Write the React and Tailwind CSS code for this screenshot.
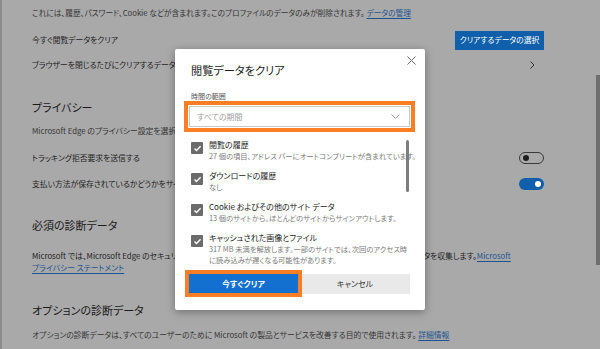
import React from 'react';

const Toggle = ({ on }) => (
  on ? (
    <div className="w-[25px] h-[12px] rounded-full bg-[#0f5fab] flex items-center justify-end pr-[3px]">
      <div className="w-[6px] h-[6px] rounded-full bg-white" />
    </div>
  ) : (
    <div className="w-[25px] h-[12px] rounded-full border border-[#3a3a3a] flex items-center pl-[3px]">
      <div className="w-[6px] h-[6px] rounded-full bg-[#1e1e1e]" />
    </div>
  )
);

const Check = () => (
  <div className="w-[12px] h-[12px] rounded-[1px] bg-[#6b6b6b] flex items-center justify-center shrink-0 mt-[3px]">
    <svg width="9" height="9" viewBox="0 0 9 9"><path d="M1.5 4.6 L3.5 6.6 L7.6 2.2" fill="none" stroke="#fff" strokeWidth="1.4" /></svg>
  </div>
);

const Item = ({ label, subs }) => (
  <div className="flex gap-[6px] pl-[16px] mb-[8px]">
    <Check />
    <div>
      <div className="h-[12px] leading-[12px] text-[8px] text-[#222] whitespace-nowrap">{label}</div>
      {subs.map((s, i) => <div key={i} className="leading-[11px] text-[7.3px] text-[#7a7a7a] whitespace-nowrap">{s}</div>)}
    </div>
  </div>
);

export default function App() {
  return (
    <div className="relative w-[600px] h-[349px] overflow-hidden bg-[#a9a9a9] border-l-2 border-[#8c8c8c] [font-family:'Noto_Sans_CJK_JP',sans-serif] [font-feature-settings:'palt']">
      <div className="flex flex-col pl-[30px] pr-[56px]">
        <div className="h-[26px] flex items-center text-[7.7px] text-[#353535] whitespace-nowrap">
          これには、履歴、パスワード、Cookie などが含まれます。このプロファイルのデータのみが削除されます。<span className="ml-[2px] text-[#1d5490] underline underline-offset-2">データの管理</span>
        </div>
        <div className="h-[28px] flex items-center justify-between text-[7.8px] text-[#1e1e1e]">
          <span>今すぐ閲覧データをクリア</span>
          <div className="w-[89px] h-[19px] bg-[#0f5fab] text-white flex items-center justify-center">クリアするデータの選択</div>
        </div>
        <div className="h-[22px] flex items-center justify-between text-[7.8px] text-[#1e1e1e] pr-[9px]">
          <span>ブラウザーを閉じるたびにクリアするデータを選択する</span>
          <svg width="5" height="8" viewBox="0 0 5 8"><path d="M0.5 0.5 L4 4 L0.5 7.5" fill="none" stroke="#333" strokeWidth="1" /></svg>
        </div>
        <div className="mt-[20px] h-[22px] flex items-center text-[11px] text-[#1a1a1a]">プライバシー</div>
        <div className="mt-[2px] h-[22px] flex items-center text-[7.8px] text-[#353535]">Microsoft Edge のプライバシー設定を選択します。</div>
        <div className="mt-[5px] h-[22px] flex items-center justify-between text-[7.8px] text-[#1e1e1e]">
          <span>トラッキング拒否要求を送信する</span>
          <Toggle />
        </div>
        <div className="mt-[3px] h-[23px] flex items-center justify-between text-[7.8px] text-[#1e1e1e]">
          <span>支払い方法が保存されているかどうかをサイトで確認できるようにする</span>
          <Toggle on />
        </div>
        <div className="mt-[19px] h-[22px] flex items-center text-[11px] text-[#1a1a1a]">必須の診断データ</div>
        <div className="mt-[14px] leading-[12px] text-[7.8px] text-[#1e1e1e] whitespace-nowrap">
          Microsoft では、Microsoft Edge のセキュリティを確保し、最新の状態に保ち、期待通りに動作させるために必要なデータを収集します。<span className="text-[#1d5490] underline underline-offset-2">Microsoft</span>
          <br />
          <span className="text-[#1d5490] underline underline-offset-2">プライバシー ステートメント</span>
        </div>
        <div className="mt-[25px] h-[22px] flex items-center text-[11px] text-[#1a1a1a]">オプションの診断データ</div>
        <div className="mt-[3px] h-[22px] flex items-center text-[7.8px] text-[#353535] whitespace-nowrap">
          オプションの診断データは、すべてのユーザーのために Microsoft の製品とサービスを改善する目的で使用されます。<span className="ml-[2px] text-[#1d5490] underline underline-offset-2">詳細情報</span>
        </div>
      </div>

      <div className="absolute right-0 top-[75px] w-[4px] h-[190px] bg-[#6e6e6e]" />

      <div className="absolute left-[173px] top-[49px] w-[250px] h-[261px] bg-white rounded-[2px] shadow-[0_2px_8px_rgba(0,0,0,0.35)]">
        <div className="flex justify-between pl-[16px] pr-[9px] pt-[7px]">
          <div className="mt-[5px] h-[18px] leading-[18px] text-[11.2px] text-[#1e1e1e]">閲覧データをクリア</div>
          <svg width="9" height="9" viewBox="0 0 9 9"><path d="M0.5 0.5 L8.5 8.5 M8.5 0.5 L0.5 8.5" stroke="#6a6a6a" strokeWidth="1" /></svg>
        </div>
        <div className="mt-[12px] pl-[16px] h-[10px] leading-[10px] text-[7px] text-[#555]">時間の範囲</div>
        <div className="mt-[5px] ml-[14px] w-[221px] h-[21px] border border-[#c9c9c9] bg-white flex items-center justify-between pl-[7px] pr-[9px] outline-4 outline-offset-1 outline-[#fb7d24]">
          <span className="text-[8px] text-[#a0a0a0]">すべての期間</span>
          <svg width="9" height="5" viewBox="0 0 9 5"><path d="M0.5 0.5 L4.5 4.5 L8.5 0.5" fill="none" stroke="#9a9a9a" strokeWidth="1" /></svg>
        </div>
        <div className="relative mt-[12px] h-[127px] overflow-hidden">
          <div className="absolute left-[231px] top-[1px] w-[3px] h-[52px] rounded-full bg-[#7d7d7d]" />
          <Item label="閲覧の履歴" subs={['27 個の項目、アドレス バーにオートコンプリートが含まれています。']} />
          <Item label="ダウンロードの履歴" subs={['なし']} />
          <Item label="Cookie およびその他のサイト データ" subs={['13 個のサイトから。ほとんどのサイトからサインアウトします。']} />
          <Item label="キャッシュされた画像とファイル" subs={['317 MB 未満を解放します。一部のサイトでは、次回のアクセス時', 'に読み込みが遅くなる可能性があります。']} />
        </div>
        <div className="flex gap-[2px] ml-[14px] mt-[8px]">
          <div className="relative z-10 w-[109px] h-[19px] bg-[#1470d0] text-white text-[8px] font-bold flex items-center justify-center outline-4 outline-[#fb7d24]">今すぐクリア</div>
          <div className="w-[110px] h-[20px] bg-[#e9e9e9] text-[#333] text-[8px] flex items-center justify-center">キャンセル</div>
        </div>
      </div>
    </div>
  );
}
